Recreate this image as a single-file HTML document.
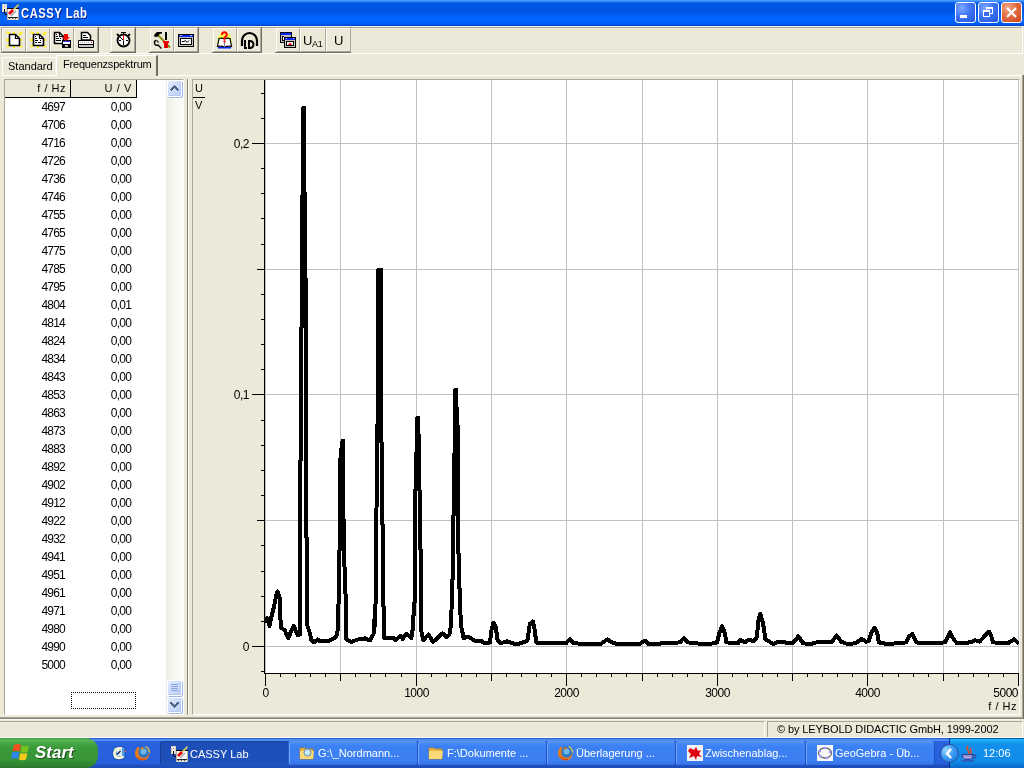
<!DOCTYPE html>
<html><head><meta charset="utf-8">
<style>
*{margin:0;padding:0;box-sizing:border-box}
html,body{width:1024px;height:768px;overflow:hidden;background:#ECE9D8;font-family:"Liberation Sans",sans-serif;font-size:11px;color:#000;-webkit-font-smoothing:antialiased}
.a{position:absolute}
#title{left:0;top:0;width:1024px;height:26px;background:linear-gradient(to bottom,#4A9BFF 0px,#4A9BFF 1px,#1A74FF 2px,#0058E6 3px,#0055E5 12px,#0062F8 16px,#0066FF 21px,#0060F8 23px,#0050E0 25px,#0040C8 26px)}
#title .t{left:21px;top:5px;color:#fff;font-weight:bold;font-size:13px;letter-spacing:-0.6px;text-shadow:1px 1px #0A1F8F}
.wb{top:2px;width:21px;height:21px;border:1px solid #fff;border-radius:3px;background:radial-gradient(circle at 30% 25%,#7FA8FF 0%,#3F74F5 45%,#1F57E0 100%)}
.wb.c{background:radial-gradient(circle at 30% 25%,#F2A88A 0%,#E36B42 45%,#CC4418 100%)}
.tb{top:28px;height:24px;width:24px;border:1px solid;border-color:#fff #ACA899 #ACA899 #fff}
.grp{top:27px;height:26px;border-right:1px solid #716F64;border-bottom:1px solid #716F64}
.lbl{font-size:11px;white-space:nowrap}
.lbl.r{text-align:right}
.lbl.c{text-align:center}
.row{left:5px;width:131px;height:18px;font-size:12px;letter-spacing:-0.8px}
.row .f{position:absolute;right:71px;top:2px}
.row .u{position:absolute;right:5px;top:2px}
#task{left:0;top:738px;width:1024px;height:30px;background:linear-gradient(to bottom,#2E5FD0 0px,#2E5FD0 1px,#4C8DEE 1px,#4C8DEE 3px,#2C68E2 3px,#2862DE 5px,#2660DC 26px,#1F4FC0 27px,#1D4CB8 30px)}
#start{left:0;top:738px;width:98px;height:30px;border-radius:0 12px 12px 0;background:linear-gradient(to bottom,#3F9E3F 0px,#5BB55B 2px,#48A848 5px,#3A9A3A 10px,#379437 22px,#2F832F 27px,#2A762A 30px)}
.tk{top:741px;height:24px;width:129px;border-radius:3px;border-left:1px solid #6FA8FA;border-right:1px solid #1F50C8;background:linear-gradient(to bottom,#5B9BFF 0px,#4A8CF8 2px,#3C81F3 5px,#3A7EF2 20px,#3570E0 24px);color:#fff;font-size:11px}
.tk.act{border-left:1px solid #153C98;border-right:1px solid #2A60D0;background:linear-gradient(to bottom,#1A46A8 0px,#1E4FB8 3px,#1E50BA 22px,#2458C8 24px)}
.tk span{position:absolute;left:28px;top:6px;white-space:nowrap}
#wrap{position:absolute;left:0;top:0;width:1024px;height:768px;will-change:transform}
</style></head><body><div id="wrap">
<!-- title bar -->
<div id="title" class="a">
  <div class="a wb" style="left:955px"></div>
  <div class="a wb" style="left:978px"></div>
  <div class="a wb c" style="left:1001px"></div>
</div>
<svg class="a" style="left:0;top:0" width="1024" height="26" shape-rendering="crispEdges">
  <g transform="translate(2,4)"><rect x="0" y="0" width="5" height="8" fill="#D8D4C4"/><rect x="1" y="1" width="3" height="6" fill="#F2F0E6"/><rect x="2" y="2" width="1" height="1" fill="#F06060"/><rect x="2" y="5" width="1" height="5" fill="#000"/><rect x="3" y="10" width="2" height="1" fill="#000"/><rect x="5" y="4" width="12" height="12" fill="#B8B0A0"/><rect x="5" y="4" width="12" height="1" fill="#000"/><rect x="6" y="5" width="10" height="8" fill="#F8F8F8"/><rect x="6" y="13" width="10" height="1" fill="#222"/><rect x="6" y="14" width="10" height="2" fill="#E0DCD0"/><rect x="7" y="14" width="1" height="1" fill="#555"/><rect x="10" y="14" width="1" height="1" fill="#555"/><rect x="13" y="14" width="1" height="1" fill="#555"/><line x1="9" y1="12" x2="14" y2="7" stroke="#A0A0A0" stroke-width="1.2" shape-rendering="auto"/><polygon points="6,9 10,5 12,7 8,11" fill="#E80000" shape-rendering="auto"/><polygon points="11,5 16,0 17,1.5 12,6.5" fill="#D8C860" shape-rendering="auto"/></g>
  <!-- min -->
  <rect x="960" y="15" width="7" height="3" fill="#fff"/>
  <!-- restore -->
  <rect x="986.5" y="7.5" width="6" height="6" fill="none" stroke="#fff" stroke-width="1"/>
  <rect x="986" y="7" width="7" height="2" fill="#fff"/>
  <rect x="983" y="10" width="7" height="7" fill="#3A6EF2"/>
  <rect x="983.5" y="10.5" width="6" height="6" fill="none" stroke="#fff" stroke-width="1"/>
  <rect x="983" y="10" width="7" height="2" fill="#fff"/>
</svg>
<svg class="a" style="left:1001px;top:2px" width="21" height="21"><path d="M6 6 L15 15 M15 6 L6 15" stroke="#fff" stroke-width="2.2"/></svg>
<div class="a t" style="left:21px;top:5px;color:#fff;font-weight:bold;font-size:14px;letter-spacing:0.7px;text-shadow:1px 1px #0A1F8F;transform:scaleX(0.8);transform-origin:0 0">CASSY Lab</div>

<!-- toolbar -->
<div class="a" style="left:0;top:26px;width:1024px;height:1px;background:#F2F0E6"></div>
<div class="a" style="left:1px;top:27px;width:1021px;height:1px;background:#ACA899"></div><div class="a" style="left:1px;top:27px;width:1px;height:26px;background:#ACA899"></div><div class="a" style="left:1022px;top:27px;width:1px;height:27px;background:#fff"></div><div class="a" style="left:1022px;top:75px;width:1px;height:644px;background:#A7A491"></div><div class="a" style="left:1023px;top:75px;width:1px;height:644px;background:#716F64"></div>
<div class="a grp" style="left:1px;width:98px"></div>
<div class="a grp" style="left:110px;width:26px"></div>
<div class="a grp" style="left:149px;width:50px"></div>
<div class="a grp" style="left:212px;width:50px"></div>
<div class="a grp" style="left:275px;width:76px"></div>
<div class="a" style="left:1px;top:53px;width:1022px;height:1px;background:#fff"></div>
<div class="a tb" style="left:2px"></div>
<div class="a tb" style="left:26px"></div>
<div class="a tb" style="left:50px"></div>
<div class="a tb" style="left:74px"></div>
<div class="a tb" style="left:111px"></div>
<div class="a tb" style="left:150px"></div>
<div class="a tb" style="left:174px"></div>
<div class="a tb" style="left:213px"></div>
<div class="a tb" style="left:237px"></div>
<div class="a tb" style="left:276px"></div>
<div class="a tb" style="left:300px;width:26px"></div>
<div class="a tb" style="left:326px;width:25px"></div>
<svg class="a" style="left:0;top:26px" width="360" height="28">
<g transform="translate(0,-26)">
<line x1="7" y1="32" x2="10" y2="34" stroke="#FFF000" stroke-width="1.8"/><line x1="14" y1="32" x2="14" y2="34" stroke="#FFF000" stroke-width="1.8"/><line x1="22" y1="32" x2="19" y2="35" stroke="#FFF000" stroke-width="1.8"/><line x1="6" y1="40" x2="9" y2="40" stroke="#FFF000" stroke-width="1.8"/><line x1="22" y1="40" x2="19" y2="40" stroke="#FFF000" stroke-width="1.8"/><line x1="7" y1="47" x2="10" y2="45" stroke="#FFF000" stroke-width="1.8"/><line x1="14" y1="48" x2="14" y2="46" stroke="#FFF000" stroke-width="1.8"/><line x1="22" y1="47" x2="19" y2="45" stroke="#FFF000" stroke-width="1.8"/>
<path d="M9.5 34.5 H15.5 L19.5 38.5 V45.5 H9.5 Z" fill="#fff" stroke="#000" stroke-width="1.6" stroke-linejoin="round"/><path d="M15.5 34.5 V38.5 H19.5" fill="none" stroke="#000" stroke-width="1.2"/>
<line x1="31" y1="32" x2="34" y2="34" stroke="#FFF000" stroke-width="1.8"/><line x1="38" y1="32" x2="38" y2="34" stroke="#FFF000" stroke-width="1.8"/><line x1="46" y1="32" x2="43" y2="35" stroke="#FFF000" stroke-width="1.8"/><line x1="30" y1="40" x2="33" y2="40" stroke="#FFF000" stroke-width="1.8"/><line x1="46" y1="40" x2="43" y2="40" stroke="#FFF000" stroke-width="1.8"/><line x1="31" y1="47" x2="34" y2="45" stroke="#FFF000" stroke-width="1.8"/><line x1="38" y1="48" x2="38" y2="46" stroke="#FFF000" stroke-width="1.8"/><line x1="46" y1="47" x2="43" y2="45" stroke="#FFF000" stroke-width="1.8"/>
<path d="M33.5 34.5 H39.5 L43.5 38.5 V45.5 H33.5 Z" fill="#fff" stroke="#000" stroke-width="1.6" stroke-linejoin="round"/><path d="M39.5 34.5 V38.5 H43.5" fill="none" stroke="#000" stroke-width="1.2"/><rect x="35" y="36" width="1" height="1" fill="#000"/><rect x="35" y="38" width="2" height="1" fill="#000"/><rect x="35" y="40" width="3" height="1" fill="#000"/><rect x="40" y="40" width="1" height="1" fill="#000"/><rect x="35" y="42" width="2" height="1" fill="#000"/><rect x="38" y="42" width="3" height="1" fill="#000"/>
<path d="M54.5 32.5 H59.5 L63.5 36.5 V43.5 H54.5 Z" fill="#fff" stroke="#000" stroke-width="1.6" stroke-linejoin="round"/><path d="M59.5 32.5 V36.5 H63.5" fill="none" stroke="#000" stroke-width="1.2"/><rect x="56" y="34" width="1" height="1" fill="#000"/><rect x="56" y="36" width="2" height="1" fill="#000"/><rect x="56" y="38" width="3" height="1" fill="#000"/><rect x="60" y="38" width="1" height="1" fill="#000"/><rect x="56" y="40" width="2" height="1" fill="#000"/><rect x="58" y="40" width="3" height="1" fill="#000"/>
<rect x="62" y="40" width="9" height="8" fill="#000"/><rect x="63" y="41" width="7" height="1" fill="#2040FF"/><rect x="63" y="42" width="7" height="2" fill="#fff"/><rect x="65" y="45" width="3" height="2" fill="#B0B0B0"/>
<path d="M64 34 H68 V37 H70 L66 41 L62 37 H64 Z" fill="#FF0000"/>
<path d="M81.5 32.5 H87.5 L90.5 35.5 V40 H81.5 Z" fill="#fff" stroke="#000" stroke-width="1.5"/><rect x="83" y="35" width="3" height="1" fill="#000"/><rect x="83" y="37" width="5" height="1" fill="#000"/>
<rect x="78" y="40" width="16" height="8" rx="1" fill="#000"/><rect x="79" y="41" width="14" height="3" fill="#fff"/><path d="M80 42.5 H90" stroke="#B0B0B0" stroke-width="1" stroke-dasharray="1 1"/><rect x="79" y="45" width="14" height="2" fill="#C8C8C8"/><rect x="91" y="42" width="1" height="1" fill="#f00"/>
<circle cx="123.5" cy="40.5" r="6" fill="#fff" stroke="#000" stroke-width="1.8"/>
<rect x="121" y="32" width="5" height="1" fill="#000"/><rect x="123" y="32" width="1" height="3" fill="#000"/>
<line x1="117" y1="34" x2="119" y2="36" stroke="#000" stroke-width="1.8"/><line x1="130" y1="34" x2="128" y2="36" stroke="#000" stroke-width="1.8"/>
<rect x="123" y="35" width="1" height="5" fill="#f00"/><line x1="120" y1="37" x2="123.5" y2="40.5" stroke="#000" stroke-width="1"/>
<rect x="123" y="41" width="1" height="4" fill="#000"/><rect x="119" y="40" width="2" height="1" fill="#000"/><rect x="126" y="40" width="2" height="1" fill="#000"/>
<line x1="156" y1="33" x2="170" y2="47.5" stroke="#8E8E10" stroke-width="2"/>
<path d="M154 35 L157 32 H162 V33.5 L159.5 34 L157.5 37 L156 36.5 L155 37.5 Z" fill="#000"/>
<path d="M156.5 40.5 Q154 40.5 154.5 43.5 Q155.5 46 158 45 L161.5 48.5" fill="none" stroke="#000" stroke-width="1.4"/><path d="M157 40.5 L158.5 42.5" stroke="#000" stroke-width="1.2"/>
<rect x="165" y="32" width="2" height="8" fill="#000"/><rect x="164" y="41" width="4" height="7" fill="#FF0000"/><rect x="163" y="41" width="6" height="2" fill="#FF0000"/><rect x="165.5" y="43" width="1" height="5" fill="#900"/>
<rect x="178" y="34" width="16" height="13" fill="#000"/><rect x="179" y="35" width="14" height="2" fill="#0A24FF"/><rect x="180" y="35" width="2" height="1" fill="#C0C0FF"/><rect x="190" y="35" width="2" height="1" fill="#C0C0FF"/><rect x="179" y="37" width="14" height="9" fill="#C0C0C0"/><rect x="180" y="38" width="12" height="7" fill="#000"/><rect x="181" y="39" width="10" height="5" fill="#fff"/>
<path d="M182 41.5 H184 L185.5 40.5 L187 42.5 L189 40.5" fill="none" stroke="#000" stroke-width="1"/>
<path d="M218 38 Q220 32 224.5 31.5 Q229 32 231 38 L232 44 H217 Z" fill="#FFFF30" opacity="0.85"/>
<path d="M217.5 46.5 L219 38.5 Q222 37.5 224.5 39 Q227 37.5 230 38.5 L231.5 46.5 Q228 45.5 224.5 47 Q221 45.5 217.5 46.5 Z" fill="#fff" stroke="#000" stroke-width="1.2"/>
<rect x="218" y="47" width="13" height="1.5" fill="#0020FF"/><rect x="224" y="39" width="1" height="8" fill="#888"/>
<path d="M222 35 Q222 32.3 224.5 32.3 Q227 32.5 226.8 34.8 Q226.5 36.3 224.5 37.5 V39.5" fill="none" stroke="#FF0000" stroke-width="1.9"/><rect x="223.5" y="40.5" width="2" height="2" fill="#FF0000"/>
<path d="M242 46 V40.5 A7.5 7.5 0 0 1 257 40.5 V46" fill="none" stroke="#000" stroke-width="2.2"/>
<rect x="244" y="40" width="2" height="9" fill="#000"/><rect x="244" y="47" width="3" height="2" fill="#000"/><path d="M249 41 H250.2 A3.3 3.5 0 0 1 250.2 48 H249 Z" fill="none" stroke="#000" stroke-width="2"/>
<rect x="280" y="32" width="12" height="11" fill="#000"/><rect x="281" y="33" width="10" height="2" fill="#0A24FF"/><rect x="281" y="35" width="10" height="7" fill="#C0C0C0"/><rect x="282" y="36" width="2" height="5" fill="#000"/><rect x="283" y="37" width="1" height="3" fill="#fff"/>
<rect x="284" y="37" width="12" height="11" fill="#000"/><rect x="285" y="38" width="10" height="2" fill="#0A24FF"/><rect x="286" y="38" width="1" height="1" fill="#C0C0FF"/><rect x="293" y="38" width="1" height="1" fill="#C0C0FF"/><rect x="285" y="40" width="10" height="7" fill="#C0C0C0"/><rect x="286" y="41" width="8" height="5" fill="#000"/><rect x="287" y="42" width="6" height="3" fill="#fff"/><path d="M288 45 L290 42.5 L292 45 Z" fill="#f00"/>
</g></svg>
<div class="a" style="left:303px;top:33px;font-size:13px">U</div>
<div class="a" style="left:312px;top:39px;font-size:9px;letter-spacing:-0.3px">A1</div>
<div class="a" style="left:334px;top:33px;font-size:13px">U</div>

<!-- tabs -->
<div class="a" style="left:2px;top:75px;width:1020px;height:1px;background:#fff"></div>
<div class="a" style="left:2px;top:57px;width:54px;height:18px;border-left:1px solid #fff;border-top:1px solid #fff;border-right:1px solid #F4F2EA;border-top-left-radius:2px"></div>
<div class="a lbl" style="left:8px;top:60px">Standard</div>
<div class="a" style="left:56px;top:55px;width:102px;height:21px;border-left:1px solid #fff;border-top:1px solid #fff;border-right:2px solid #716F64;background:#ECE9D8;border-top-left-radius:2px"></div>
<div class="a lbl" style="left:63px;top:58px;letter-spacing:-0.2px">Frequenzspektrum</div>

<!-- table panel -->
<div class="a" style="left:4px;top:79px;width:180px;height:636px;border:1px solid;border-color:#ACA899 #fff #fff #ACA899;background:#fff"></div>
<div class="a" style="left:5px;top:80px;width:132px;height:17px;background:#ECE9D8;border-right:1px solid #000"></div>
<div class="a" style="left:70px;top:80px;width:1px;height:17px;background:#000"></div>
<div class="a" style="left:5px;top:97px;width:132px;height:1px;background:#000"></div>
<div class="a lbl r" style="left:5px;width:61px;top:82px;letter-spacing:0.5px">f / Hz</div>
<div class="a lbl r" style="left:71px;width:61px;top:82px;letter-spacing:0.6px">U / V</div>
<div class="a row" style="top:98px"><span class="f">4697</span><span class="u">0,00</span></div>
<div class="a row" style="top:116px"><span class="f">4706</span><span class="u">0,00</span></div>
<div class="a row" style="top:134px"><span class="f">4716</span><span class="u">0,00</span></div>
<div class="a row" style="top:152px"><span class="f">4726</span><span class="u">0,00</span></div>
<div class="a row" style="top:170px"><span class="f">4736</span><span class="u">0,00</span></div>
<div class="a row" style="top:188px"><span class="f">4746</span><span class="u">0,00</span></div>
<div class="a row" style="top:206px"><span class="f">4755</span><span class="u">0,00</span></div>
<div class="a row" style="top:224px"><span class="f">4765</span><span class="u">0,00</span></div>
<div class="a row" style="top:242px"><span class="f">4775</span><span class="u">0,00</span></div>
<div class="a row" style="top:260px"><span class="f">4785</span><span class="u">0,00</span></div>
<div class="a row" style="top:278px"><span class="f">4795</span><span class="u">0,00</span></div>
<div class="a row" style="top:296px"><span class="f">4804</span><span class="u">0,01</span></div>
<div class="a row" style="top:314px"><span class="f">4814</span><span class="u">0,00</span></div>
<div class="a row" style="top:332px"><span class="f">4824</span><span class="u">0,00</span></div>
<div class="a row" style="top:350px"><span class="f">4834</span><span class="u">0,00</span></div>
<div class="a row" style="top:368px"><span class="f">4843</span><span class="u">0,00</span></div>
<div class="a row" style="top:386px"><span class="f">4853</span><span class="u">0,00</span></div>
<div class="a row" style="top:404px"><span class="f">4863</span><span class="u">0,00</span></div>
<div class="a row" style="top:422px"><span class="f">4873</span><span class="u">0,00</span></div>
<div class="a row" style="top:440px"><span class="f">4883</span><span class="u">0,00</span></div>
<div class="a row" style="top:458px"><span class="f">4892</span><span class="u">0,00</span></div>
<div class="a row" style="top:476px"><span class="f">4902</span><span class="u">0,00</span></div>
<div class="a row" style="top:494px"><span class="f">4912</span><span class="u">0,00</span></div>
<div class="a row" style="top:512px"><span class="f">4922</span><span class="u">0,00</span></div>
<div class="a row" style="top:530px"><span class="f">4932</span><span class="u">0,00</span></div>
<div class="a row" style="top:548px"><span class="f">4941</span><span class="u">0,00</span></div>
<div class="a row" style="top:566px"><span class="f">4951</span><span class="u">0,00</span></div>
<div class="a row" style="top:584px"><span class="f">4961</span><span class="u">0,00</span></div>
<div class="a row" style="top:602px"><span class="f">4971</span><span class="u">0,00</span></div>
<div class="a row" style="top:620px"><span class="f">4980</span><span class="u">0,00</span></div>
<div class="a row" style="top:638px"><span class="f">4990</span><span class="u">0,00</span></div>
<div class="a row" style="top:656px"><span class="f">5000</span><span class="u">0,00</span></div>
<div class="a" style="left:71px;top:692px;width:65px;height:17px;border:1px dotted #000"></div>
<!-- scrollbar -->
<div class="a" style="left:166px;top:80px;width:17px;height:634px;background:linear-gradient(to right,#EEEDE5,#F9F8F3 60%,#FDFDFA)"></div>
<div class="a" style="left:167px;top:80px;width:15px;height:17px;border-radius:2px;border:1px solid #fff;box-shadow:inset -1px -1px 0 #B4C8F6,1px 1px 0 #9DB6EE;background:linear-gradient(135deg,#E2EAFE,#BACDF8)"></div>
<svg class="a" style="left:167px;top:80px" width="15" height="17" shape-rendering="crispEdges"><path d="M3.5 10.5 L7.5 6.5 L11.5 10.5" fill="none" stroke="#4D6185" stroke-width="2.2"/></svg>
<div class="a" style="left:167px;top:680px;width:15px;height:16px;border-radius:2px;border:1px solid #fff;box-shadow:inset -1px -1px 0 #B4C8F6,1px 1px 0 #9DB6EE;background:linear-gradient(135deg,#E2EAFE,#BACDF8)"></div>
<svg class="a" style="left:167px;top:680px" width="15" height="16" shape-rendering="crispEdges"><rect x="4" y="4" width="7" height="1" fill="#8DA6E6"/><rect x="4" y="6" width="7" height="1" fill="#8DA6E6"/><rect x="4" y="8" width="7" height="1" fill="#8DA6E6"/><rect x="4" y="10" width="7" height="1" fill="#8DA6E6"/></svg>
<div class="a" style="left:167px;top:697px;width:15px;height:16px;border-radius:2px;border:1px solid #fff;box-shadow:inset -1px -1px 0 #B4C8F6,1px 1px 0 #9DB6EE;background:linear-gradient(135deg,#E2EAFE,#BACDF8)"></div>
<svg class="a" style="left:167px;top:697px" width="15" height="16" shape-rendering="crispEdges"><path d="M3.5 5.5 L7.5 9.5 L11.5 5.5" fill="none" stroke="#4D6185" stroke-width="2.2"/></svg>

<!-- splitter / chart panel -->
<div class="a" style="left:187px;top:79px;width:1px;height:636px;background:#848170"></div><div class="a" style="left:188px;top:79px;width:1px;height:636px;background:#fff"></div>
<div class="a" style="left:192px;top:79px;width:828px;height:636px;border:1px solid;border-color:#ACA899 #fff #fff #ACA899"></div>
<div class="a" style="left:0;top:717px;width:1022px;height:1px;background:#A7A491"></div>
<div class="a" style="left:0;top:718px;width:1022px;height:1px;background:#8A8778"></div>
<div class="a" style="left:0;top:719px;width:1022px;height:1px;background:#F8F6EE"></div>
<svg class="a" style="left:0;top:0" width="1024" height="738" shape-rendering="crispEdges">
<rect x="265" y="80" width="754" height="593" fill="#fff"/>
<rect x="265" y="80" width="1" height="593" fill="#C0C0C0"/>
<rect x="340" y="80" width="1" height="593" fill="#C0C0C0"/>
<rect x="416" y="80" width="1" height="593" fill="#C0C0C0"/>
<rect x="491" y="80" width="1" height="593" fill="#C0C0C0"/>
<rect x="566" y="80" width="1" height="593" fill="#C0C0C0"/>
<rect x="642" y="80" width="1" height="593" fill="#C0C0C0"/>
<rect x="717" y="80" width="1" height="593" fill="#C0C0C0"/>
<rect x="792" y="80" width="1" height="593" fill="#C0C0C0"/>
<rect x="867" y="80" width="1" height="593" fill="#C0C0C0"/>
<rect x="943" y="80" width="1" height="593" fill="#C0C0C0"/>
<rect x="1018" y="80" width="1" height="593" fill="#C0C0C0"/>
<rect x="265" y="646" width="754" height="1" fill="#C0C0C0"/>
<rect x="265" y="520" width="754" height="1" fill="#C0C0C0"/>
<rect x="265" y="394" width="754" height="1" fill="#C0C0C0"/>
<rect x="265" y="269" width="754" height="1" fill="#C0C0C0"/>
<rect x="265" y="143" width="754" height="1" fill="#C0C0C0"/>
<rect x="264" y="80" width="1" height="593" fill="#000"/>
<rect x="264" y="673" width="755" height="1" fill="#000"/>
<rect x="261" y="671" width="3" height="1" fill="#000"/>
<rect x="252" y="646" width="12" height="1" fill="#000"/>
<rect x="261" y="621" width="3" height="1" fill="#000"/>
<rect x="261" y="596" width="3" height="1" fill="#000"/>
<rect x="261" y="571" width="3" height="1" fill="#000"/>
<rect x="261" y="545" width="3" height="1" fill="#000"/>
<rect x="257" y="520" width="7" height="1" fill="#000"/>
<rect x="261" y="495" width="3" height="1" fill="#000"/>
<rect x="261" y="470" width="3" height="1" fill="#000"/>
<rect x="261" y="445" width="3" height="1" fill="#000"/>
<rect x="261" y="420" width="3" height="1" fill="#000"/>
<rect x="252" y="394" width="12" height="1" fill="#000"/>
<rect x="261" y="369" width="3" height="1" fill="#000"/>
<rect x="261" y="344" width="3" height="1" fill="#000"/>
<rect x="261" y="319" width="3" height="1" fill="#000"/>
<rect x="261" y="294" width="3" height="1" fill="#000"/>
<rect x="257" y="269" width="7" height="1" fill="#000"/>
<rect x="261" y="244" width="3" height="1" fill="#000"/>
<rect x="261" y="218" width="3" height="1" fill="#000"/>
<rect x="261" y="193" width="3" height="1" fill="#000"/>
<rect x="261" y="168" width="3" height="1" fill="#000"/>
<rect x="252" y="143" width="12" height="1" fill="#000"/>
<rect x="261" y="118" width="3" height="1" fill="#000"/>
<rect x="261" y="93" width="3" height="1" fill="#000"/>
<rect x="265" y="674" width="1" height="12" fill="#000"/>
<rect x="280" y="674" width="1" height="3" fill="#000"/>
<rect x="295" y="674" width="1" height="3" fill="#000"/>
<rect x="310" y="674" width="1" height="3" fill="#000"/>
<rect x="325" y="674" width="1" height="3" fill="#000"/>
<rect x="340" y="674" width="1" height="7" fill="#000"/>
<rect x="355" y="674" width="1" height="3" fill="#000"/>
<rect x="370" y="674" width="1" height="3" fill="#000"/>
<rect x="385" y="674" width="1" height="3" fill="#000"/>
<rect x="401" y="674" width="1" height="3" fill="#000"/>
<rect x="416" y="674" width="1" height="12" fill="#000"/>
<rect x="431" y="674" width="1" height="3" fill="#000"/>
<rect x="446" y="674" width="1" height="3" fill="#000"/>
<rect x="461" y="674" width="1" height="3" fill="#000"/>
<rect x="476" y="674" width="1" height="3" fill="#000"/>
<rect x="491" y="674" width="1" height="7" fill="#000"/>
<rect x="506" y="674" width="1" height="3" fill="#000"/>
<rect x="521" y="674" width="1" height="3" fill="#000"/>
<rect x="536" y="674" width="1" height="3" fill="#000"/>
<rect x="551" y="674" width="1" height="3" fill="#000"/>
<rect x="566" y="674" width="1" height="12" fill="#000"/>
<rect x="581" y="674" width="1" height="3" fill="#000"/>
<rect x="596" y="674" width="1" height="3" fill="#000"/>
<rect x="611" y="674" width="1" height="3" fill="#000"/>
<rect x="626" y="674" width="1" height="3" fill="#000"/>
<rect x="642" y="674" width="1" height="7" fill="#000"/>
<rect x="657" y="674" width="1" height="3" fill="#000"/>
<rect x="672" y="674" width="1" height="3" fill="#000"/>
<rect x="687" y="674" width="1" height="3" fill="#000"/>
<rect x="702" y="674" width="1" height="3" fill="#000"/>
<rect x="717" y="674" width="1" height="12" fill="#000"/>
<rect x="732" y="674" width="1" height="3" fill="#000"/>
<rect x="747" y="674" width="1" height="3" fill="#000"/>
<rect x="762" y="674" width="1" height="3" fill="#000"/>
<rect x="777" y="674" width="1" height="3" fill="#000"/>
<rect x="792" y="674" width="1" height="7" fill="#000"/>
<rect x="807" y="674" width="1" height="3" fill="#000"/>
<rect x="822" y="674" width="1" height="3" fill="#000"/>
<rect x="837" y="674" width="1" height="3" fill="#000"/>
<rect x="852" y="674" width="1" height="3" fill="#000"/>
<rect x="867" y="674" width="1" height="12" fill="#000"/>
<rect x="882" y="674" width="1" height="3" fill="#000"/>
<rect x="898" y="674" width="1" height="3" fill="#000"/>
<rect x="913" y="674" width="1" height="3" fill="#000"/>
<rect x="928" y="674" width="1" height="3" fill="#000"/>
<rect x="943" y="674" width="1" height="7" fill="#000"/>
<rect x="958" y="674" width="1" height="3" fill="#000"/>
<rect x="973" y="674" width="1" height="3" fill="#000"/>
<rect x="988" y="674" width="1" height="3" fill="#000"/>
<rect x="1003" y="674" width="1" height="3" fill="#000"/>
<rect x="1018" y="674" width="1" height="12" fill="#000"/>
</svg>
<svg class="a" style="left:0;top:0" width="1024" height="738">
<defs><clipPath id="pc"><rect x="265" y="79" width="754" height="594"/></clipPath></defs>
<polyline shape-rendering="crispEdges" clip-path="url(#pc)" fill="none" stroke="#000" stroke-width="4" stroke-linejoin="round" stroke-linecap="round" points="265.5,621.4 267.0,618.4 269.5,625.9 272.0,614.4 274.0,606.4 276.0,596.4 277.5,591.4 279.5,596.4 280.2,608.4 280.7,627.4 284.8,630.4 288.4,638.4 291.0,631.4 293.9,625.9 296.0,631.4 298.0,635.4 300.3,634.0 300.0,461.4 301.0,459.4 301.0,328.4 302.0,326.4 302.0,196.4 303.0,194.4 303.0,108.0 304.0,108.0 304.0,191.4 305.0,193.4 305.0,277.4 306.0,279.4 306.0,536.4 307.0,538.4 307.5,626.4 309.4,631.4 311.5,640.4 314.0,642.4 317.6,639.4 320.2,641.4 327.5,641.4 334.8,638.1 337.4,634.0 339.0,591.1 339.0,552.4 340.0,548.4 340.0,459.4 341.0,456.4 341.0,449.4 342.0,446.4 342.5,441.0 343.0,441.0 343.0,517.4 344.0,520.4 344.0,565.4 345.0,568.4 346.4,639.1 351.0,642.0 357.0,639.7 365.2,638.4 369.9,640.4 373.4,634.4 374.5,627.4 375.1,612.2 374.0,627.4 374.0,625.4 375.0,612.4 375.0,610.4 376.0,598.4 376.0,596.4 377.0,425.4 378.0,423.4 378.0,270.0 381.0,270.0 381.0,441.4 382.0,443.4 382.0,523.4 383.0,525.4 383.0,605.4 384.0,607.4 384.0,637.9 393.3,637.9 395.6,640.4 400.3,635.6 402.7,639.1 406.2,633.8 408.5,635.6 411.4,637.9 412.6,629.7 413.0,616.4 414.0,614.4 414.0,603.4 415.0,601.4 415.0,490.4 416.0,488.4 416.0,453.4 417.0,451.4 417.0,418.0 418.0,418.0 418.0,433.4 419.0,435.4 419.0,489.4 420.0,491.4 420.0,548.4 421.0,550.4 421.0,629.7 423.2,640.3 428.4,634.4 433.1,642.0 442.5,633.3 446.6,637.4 449.5,634.4 451.3,622.7 452.0,580.4 453.0,578.4 453.0,516.4 454.0,514.4 454.0,454.4 455.0,452.4 455.0,390.0 456.0,390.0 456.0,406.4 457.0,408.4 457.0,424.4 458.0,426.4 458.0,552.4 459.0,554.4 459.0,587.4 460.0,589.4 460.7,623.9 463.6,637.9 468.3,636.8 475.3,640.9 481.2,640.9 483.5,642.6 490.0,642.6 491.7,628.6 493.5,622.7 495.8,627.4 497.6,640.3 500.5,643.2 507.0,641.4 516.3,644.4 524.5,642.0 527.5,640.3 529.8,623.9 532.8,621.5 534.5,628.6 536.3,642.6 555.0,643.3 566.0,643.3 569.8,639.1 573.8,643.3 589.4,644.1 600.3,644.1 607.3,639.4 612.0,642.4 617.5,644.1 639.4,644.1 644.8,640.6 648.8,644.1 664.4,643.3 680.0,642.4 683.9,638.1 687.8,642.4 703.4,644.1 715.0,643.3 717.0,642.4 719.4,633.1 722.2,626.1 724.8,633.1 726.4,642.4 738.0,643.3 740.5,639.7 745.0,642.4 748.3,639.7 753.8,641.0 756.9,637.1 758.4,620.6 760.3,613.6 763.1,623.8 765.5,639.4 769.4,641.7 773.3,644.1 778.0,641.7 792.8,643.3 798.3,636.3 803.0,643.3 810.0,644.1 819.4,641.7 831.9,641.7 836.6,635.5 841.2,641.7 847.5,644.1 855.3,643.3 861.6,639.1 866.2,641.7 868.7,641.0 871.8,631.6 874.9,627.7 877.3,633.1 878.8,642.4 887.4,644.1 906.2,642.4 909.3,636.3 912.4,633.9 916.3,642.4 926.5,643.3 945.2,642.4 949.9,632.4 953.8,639.4 957.0,643.3 970.2,642.4 975.0,640.2 979.6,641.7 985.9,634.7 989.0,631.6 991.3,636.3 992.9,642.4 1007.8,643.3 1014.0,639.4 1017.5,642.4"/>
</svg>
<div class="a lbl" style="left:195px;top:82px">U</div>
<div class="a" style="left:193px;top:97px;width:12px;height:1px;background:#000"></div>
<div class="a lbl" style="left:195px;top:99px">V</div>
<div class="a lbl r" style="left:202px;width:47px;top:640px;font-size:12px;letter-spacing:-0.5px">0</div>
<div class="a lbl r" style="left:202px;width:47px;top:388px;font-size:12px;letter-spacing:-0.5px">0,1</div>
<div class="a lbl r" style="left:202px;width:47px;top:137px;font-size:12px;letter-spacing:-0.5px">0,2</div>
<div class="a lbl c" style="left:235px;width:61px;top:686px;font-size:12px;letter-spacing:-0.5px">0</div>
<div class="a lbl c" style="left:386px;width:61px;top:686px;font-size:12px;letter-spacing:-0.5px">1000</div>
<div class="a lbl c" style="left:536px;width:61px;top:686px;font-size:12px;letter-spacing:-0.5px">2000</div>
<div class="a lbl c" style="left:687px;width:61px;top:686px;font-size:12px;letter-spacing:-0.5px">3000</div>
<div class="a lbl c" style="left:837px;width:61px;top:686px;font-size:12px;letter-spacing:-0.5px">4000</div>
<div class="a lbl r" style="left:958px;width:60px;top:686px;font-size:12px;letter-spacing:-0.5px">5000</div>
<div class="a lbl r" style="left:950px;width:67px;top:700px;letter-spacing:0.5px">f / Hz</div>

<!-- status bar -->
<div class="a" style="left:0;top:721px;width:765px;height:16px;border-top:1px solid #ACA899;border-right:1px solid #fff"></div>
<div class="a" style="left:767px;top:721px;width:256px;height:16px;border-top:1px solid #ACA899;border-left:1px solid #ACA899;border-right:1px solid #fff"></div>
<div class="a lbl" style="left:777px;top:723px;letter-spacing:-0.1px">© by LEYBOLD DIDACTIC GmbH, 1999-2002</div>
<div class="a" style="left:0;top:737px;width:1024px;height:1px;background:#FDFCF8"></div>

<!-- taskbar -->
<div id="task" class="a"></div>
<div id="start" class="a"><span class="a" style="left:35px;top:5px;color:#fff;font-weight:bold;font-style:italic;font-size:17px;text-shadow:1px 1px #1E4A1E">Start</span></div>
<div class="a tk act" style="left:160px"><span style="left:29px;top:7px">CASSY Lab</span></div>
<div class="a tk" style="left:289px"><span>G:\_Nordmann...</span></div>
<div class="a tk" style="left:418px"><span>F:\Dokumente ...</span></div>
<div class="a tk" style="left:547px"><span>Überlagerung ...</span></div>
<div class="a tk" style="left:676px;width:130px"><span>Zwischenablag...</span></div>
<div class="a tk" style="left:806px"><span>GeoGebra - Üb...</span></div>
<div class="a" style="left:949px;top:738px;width:75px;height:30px;background:linear-gradient(to bottom,#0C59B8 0px,#0C59B8 1px,#22B8F8 1px,#18A8F4 3px,#1290EE 6px,#0F8BE8 24px,#0C78D8 27px,#0A68C8 30px);border-left:1px solid #0A2F8A"></div>
<div class="a" style="left:940px;top:744px;width:19px;height:19px;border-radius:50%;border:1px solid #2A4E98;background:radial-gradient(circle at 30% 30%,#9AD8FF 0%,#3A9AF4 45%,#1070E0 100%)"></div>
<svg class="a" style="left:940px;top:744px" width="19" height="19"><path d="M11 5 L7 9.5 L11 14" fill="none" stroke="#fff" stroke-width="2.4"/></svg>
<div class="a lbl" style="left:983px;top:747px;color:#fff">12:06</div>
<svg class="a" style="left:10px;top:743px" width="20" height="19"><path d="M4 2 Q7 0 11 2 L9.5 8.5 Q6 7 2.5 8.5 Z" fill="#F0501E"/><path d="M12 2.5 Q15 4 19 2.5 L17.5 9 Q14 10 10.5 9 Z" fill="#78C41E"/><path d="M2.3 9.3 Q6 8 9.3 9.5 L8 16 Q5 14.5 1 16 Z" fill="#2E86E8"/><path d="M10.3 10 Q14 11 17.3 10 L16 16.5 Q12.5 18 9 16.5 Z" fill="#F8C81A"/></svg>
<svg class="a" style="left:111px;top:745px" width="17" height="16"><path d="M3 2 H13 L14 3 V13 L13 14 H3 L2 13 V3 Z" fill="#4C9BEA" stroke="#1846A8" stroke-width="0.8"/><path d="M11 3.5 Q5 2.5 3.5 7.5 Q3 12.5 8 13 Q11 13 12 11" fill="none" stroke="#FFF6D0" stroke-width="2.6"/><rect x="6" y="5" width="5" height="6" fill="#DCEBFA"/><path d="M6 9.5 L9.5 6" stroke="#102040" stroke-width="1.2"/><path d="M14 6 L15 7 L16 6 L15 5 Z" fill="#F05A20" transform="translate(-0.5,0.5)"/></svg>
<svg class="a" style="left:134px;top:745px" width="17" height="16"><circle cx="9" cy="7.5" r="6.3" fill="#2F78C0"/><circle cx="9.5" cy="6.5" r="3" fill="#6EB6E8"/><path d="M2.5 3.5 L4 1.5 L5.5 3.5 Q3.5 7 5 10.5 Q7.5 13.5 11.5 12.5 Q14.5 11 15.2 7.5 Q15.8 12 12.8 14.2 Q9 16.3 5 14.8 Q0.8 12.5 1 7.5 Q1.2 5.3 2.5 3.5 Z" fill="#EE7A16"/><path d="M6.5 3 Q8.5 1.5 10 3 L8 5 Z" fill="#EE7A16"/><path d="M11.5 1.5 Q15 3 15.6 7.5" fill="none" stroke="#F8C838" stroke-width="1.3"/><path d="M3 12 Q6 15.5 11 14.5" fill="none" stroke="#C83E10" stroke-width="0.9"/></svg>
<svg class="a" style="left:171px;top:746px" width="17" height="16" shape-rendering="crispEdges"><rect x="0" y="0" width="5" height="8" fill="#D8D4C4"/><rect x="1" y="1" width="3" height="6" fill="#F2F0E6"/><rect x="2" y="2" width="1" height="1" fill="#F06060"/><rect x="2" y="5" width="1" height="5" fill="#000"/><rect x="3" y="10" width="2" height="1" fill="#000"/><rect x="5" y="4" width="12" height="12" fill="#B8B0A0"/><rect x="5" y="4" width="12" height="1" fill="#000"/><rect x="6" y="5" width="10" height="8" fill="#F8F8F8"/><rect x="6" y="13" width="10" height="1" fill="#222"/><rect x="6" y="14" width="10" height="2" fill="#E0DCD0"/><rect x="7" y="14" width="1" height="1" fill="#555"/><rect x="10" y="14" width="1" height="1" fill="#555"/><rect x="13" y="14" width="1" height="1" fill="#555"/><line x1="9" y1="12" x2="14" y2="7" stroke="#A0A0A0" stroke-width="1.2" shape-rendering="auto"/><polygon points="6,9 10,5 12,7 8,11" fill="#E80000" shape-rendering="auto"/><polygon points="11,5 16,0 17,1.5 12,6.5" fill="#D8C860" shape-rendering="auto"/></svg>
<svg class="a" style="left:299px;top:746px" width="16" height="14"><path d="M1 2 H6 L7 3 H14 V13 H1 Z" fill="#E8B84A" stroke="#B08020" stroke-width="0.8"/><path d="M1 5 H15 L14 13 H1 Z" fill="#F8D878"/></svg>
<svg class="a" style="left:428px;top:746px" width="16" height="14"><path d="M1 2 H6 L7 3 H14 V13 H1 Z" fill="#E8B84A" stroke="#B08020" stroke-width="0.8"/><path d="M1 5 H15 L14 13 H1 Z" fill="#F8D878"/></svg>
<svg class="a" style="left:303px;top:748px" width="10" height="10"><circle cx="4.5" cy="4.5" r="3.5" fill="#C8E8F8" stroke="#6090B0" stroke-width="1"/></svg>
<svg class="a" style="left:557px;top:745px" width="17" height="16"><circle cx="9" cy="7.5" r="6.3" fill="#2F78C0"/><circle cx="9.5" cy="6.5" r="3" fill="#6EB6E8"/><path d="M2.5 3.5 L4 1.5 L5.5 3.5 Q3.5 7 5 10.5 Q7.5 13.5 11.5 12.5 Q14.5 11 15.2 7.5 Q15.8 12 12.8 14.2 Q9 16.3 5 14.8 Q0.8 12.5 1 7.5 Q1.2 5.3 2.5 3.5 Z" fill="#EE7A16"/><path d="M6.5 3 Q8.5 1.5 10 3 L8 5 Z" fill="#EE7A16"/><path d="M11.5 1.5 Q15 3 15.6 7.5" fill="none" stroke="#F8C838" stroke-width="1.3"/><path d="M3 12 Q6 15.5 11 14.5" fill="none" stroke="#C83E10" stroke-width="0.9"/></svg>
<svg class="a" style="left:687px;top:745px" width="16" height="16"><rect x="0" y="0" width="16" height="16" fill="#F4F4F4"/><path d="M3 3 L7 5 L9 2 L11 6 L14 5 L12 9 L15 12 L10 11 L9 15 L7 11 L2 13 L4 9 L1 6 Z" fill="#E00010"/></svg>
<svg class="a" style="left:817px;top:745px" width="16" height="16"><rect x="0" y="0" width="16" height="16" fill="#F8F8F8"/><ellipse cx="8" cy="8" rx="6.5" ry="5" fill="none" stroke="#666" stroke-width="1.3"/><circle cx="3" cy="6" r="1.3" fill="#99f"/><circle cx="8" cy="3" r="1.3" fill="#99f"/><circle cx="13" cy="7" r="1.3" fill="#99f"/><circle cx="10" cy="13" r="1.3" fill="#99f"/><circle cx="3" cy="11" r="1.3" fill="#99f"/></svg>
<svg class="a" style="left:960px;top:745px" width="17" height="17"><path d="M8 1 Q6 3.5 8 5.5 Q10 7.5 8 9" fill="none" stroke="#E8501A" stroke-width="1.4"/><path d="M11 2.5 Q9.5 4.5 11 6 Q12 7.5 10.5 9" fill="none" stroke="#E8501A" stroke-width="1.2"/><path d="M2 9.5 H13 Q13 14.5 7.5 14.5 Q2 14.5 2 9.5 Z" fill="#5858C0" stroke="#303088" stroke-width="0.8"/><path d="M3 11 H12 M3.5 12.8 H11.5" stroke="#E0E0FF" stroke-width="0.9"/><path d="M13 10 Q16.5 9.5 15.5 12 Q14.5 13.5 12 14" fill="none" stroke="#404098" stroke-width="1.1"/><path d="M1 16 H14" stroke="#404098" stroke-width="1.1"/></svg>
</div></body></html>
